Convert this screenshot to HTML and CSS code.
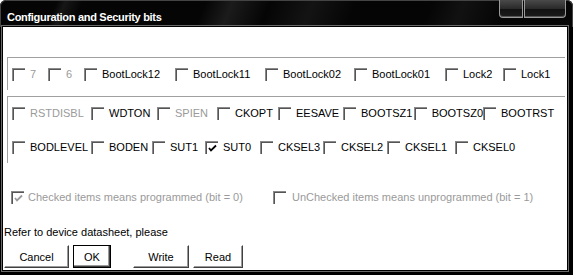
FILE: index.html
```html
<!DOCTYPE html>
<html lang="en">

<head>
    <meta charset="UTF-8">
    <title>Configuration and Security bits</title>
    <link rel="stylesheet" href="styles.css">
</head>

<body>
    <div class="window">
        <div class="titlebar">
            <span class="title">Configuration and Security bits</span>
            <div class="caption_btns">
                <span class="cap_btn small"></span>
                <span class="cap_btn wide"></span>
            </div>
        </div>
        <div class="client">
            <div class="group">
                <div class="row row1">
                    <label class="item off"><span class="cb"></span>7</label>
                    <label class="item off"><span class="cb"></span>6</label>
                    <label class="item"><span class="cb"></span>BootLock12</label>
                    <label class="item"><span class="cb"></span>BootLock11</label>
                    <label class="item"><span class="cb"></span>BootLock02</label>
                    <label class="item"><span class="cb"></span>BootLock01</label>
                    <label class="item"><span class="cb"></span>Lock2</label>
                    <label class="item"><span class="cb"></span>Lock1</label>
                </div>
            </div>
            <div class="group group2">
                <div class="row row2">
                    <label class="item off"><span class="cb"></span>RSTDISBL</label>
                    <label class="item"><span class="cb"></span>WDTON</label>
                    <label class="item off"><span class="cb"></span>SPIEN</label>
                    <label class="item"><span class="cb"></span>CKOPT</label>
                    <label class="item"><span class="cb"></span>EESAVE</label>
                    <label class="item"><span class="cb"></span>BOOTSZ1</label>
                    <label class="item"><span class="cb"></span>BOOTSZ0</label>
                    <label class="item"><span class="cb"></span>BOOTRST</label>
                </div>
                <div class="row row3">
                    <label class="item"><span class="cb"></span>BODLEVEL</label>
                    <label class="item"><span class="cb"></span>BODEN</label>
                    <label class="item"><span class="cb"></span>SUT1</label>
                    <label class="item"><span class="cb"><svg width="9" height="9" viewBox="0 0 9 9"><polyline points="1,4 3,6.5 8,1.5" fill="none" stroke="#000" stroke-width="1.8"/></svg></span>SUT0</label>
                    <label class="item"><span class="cb"></span>CKSEL3</label>
                    <label class="item"><span class="cb"></span>CKSEL2</label>
                    <label class="item"><span class="cb"></span>CKSEL1</label>
                    <label class="item"><span class="cb"></span>CKSEL0</label>
                </div>
            </div>
            <div class="row legend">
                <label class="item off"><span class="cb"><svg width="9" height="9" viewBox="0 0 9 9"><polyline points="1,4 3,6.5 8,1.5" fill="none" stroke="#9a9a9a" stroke-width="1.8"/></svg></span>Checked items means programmed (bit = 0)</label>
                <label class="item off"><span class="cb"></span>UnChecked items means unprogrammed (bit = 1)</label>
            </div>
            <div class="note">Refer to device datasheet, please</div>
            <div class="buttons">
                <button class="btn cancel">Cancel</button>
                <button class="btn ok">OK</button>
                <button class="btn write">Write</button>
                <button class="btn read">Read</button>
            </div>
        </div>
    </div>
</body>

</html>
```

FILE: styles.css
```css
* {
    margin: 0;
    padding: 0;
    box-sizing: border-box;
}

body {
    background: #fff;
    font-family: "Liberation Sans", Arial, sans-serif;
    font-size: 11px;
}

.window {
    width: 573px;
    height: 275px;
    background: #000;
    border-radius: 6px 6px 0 0;
    display: flex;
    flex-direction: column;
    padding: 0 6px 5px 3px;
    position: relative;
}

.titlebar {
    height: 27px;
    margin: 0 -6px 0 -3px;
    padding: 6px 0 0 6px;
    border-radius: 6px 6px 0 0;
    border: 1px solid #444;
    border-bottom: none;
    background:
        linear-gradient(112deg, transparent 0, transparent 52px, rgba(255, 255, 255, 0.07) 60px, transparent 76px,
            transparent 190px, rgba(255, 255, 255, 0.09) 215px, transparent 250px,
            rgba(255, 255, 255, 0.06) 290px, transparent 330px,
            transparent 400px, rgba(255, 255, 255, 0.05) 430px, transparent 470px),
        #050505;
    display: flex;
    justify-content: space-between;
}

.title {
    color: #fff;
    font-weight: bold;
    font-size: 11px;
    line-height: 20px;
    letter-spacing: -0.3px;
}

.caption_btns {
    display: flex;
    gap: 1px;
    margin: -7px 6px 0 0;
    height: 18px;
}

.cap_btn {
    display: block;
    height: 18px;
    border: 1px solid #9a9a9a;
    border-top: none;
    background: linear-gradient(#4a4a4a, #2a2a2a 50%, #111 51%, #1c1c1c);
    box-shadow: inset 0 -1px 0 #555;
}

.cap_btn.small {
    width: 24px;
    border-radius: 0 0 0 4px;
}

.cap_btn.wide {
    width: 42px;
    border-radius: 0 0 4px 0;
}

.client {
    flex: 1;
    background: #fff;
    box-shadow: 0 0 0 1px #000, 0 0 0 2px #6a6a6a;
    display: flex;
    flex-direction: column;
}

.group {
    margin: 30px 2px 0 4px;
    border-top: 1px solid #a0a0a0;
    border-left: 1px solid #a0a0a0;
    padding: 8px 0 8px 4px;
}

.group2 {
    margin-top: 6px;
}

.row {
    display: grid;
    height: 16px;
    align-items: center;
}

.row1 {
    grid-template-columns: 36px 36px 91px 90px 89px 91px 58px auto;
}

.row2 {
    grid-template-columns: 79px 66px 60px 61px 65px 71px 69px auto;
}

.row3 {
    margin-top: 18px;
    grid-template-columns: 79px 61px 53px 55px 63px 64px 68px auto;
}

.legend {
    margin: 26px 0 0 8px;
    grid-template-columns: 262px auto;
}

.item {
    display: flex;
    align-items: center;
    color: #000;
    white-space: nowrap;
}

.item.off {
    color: #9a9a9a;
}

.cb {
    width: 13px;
    height: 13px;
    margin-right: 5px;
    border-top: 1px solid #8a8a8a;
    border-left: 1px solid #8a8a8a;
    box-shadow: inset 1px 1px 0 #555;
    display: flex;
    align-items: center;
    justify-content: center;
    padding: 1px 0 0 1px;
}

.legend .cb {
    margin-right: 4px;
}

.legend .item + .item .cb {
    margin-right: 6px;
}

.note {
    margin: 20px 0 0 1px;
    line-height: 14px;
}

.buttons {
    display: flex;
    margin: 6px 0 0 1px;
}

.btn {
    height: 23px;
    font-family: "Liberation Sans", Arial, sans-serif;
    font-size: 11px;
    color: #000;
    background: #fff;
    border: 1px solid;
    border-color: #fff #404040 #404040 #fff;
    box-shadow: inset -1px -1px 0 #9a9a9a;
}

.cancel {
    width: 65px;
}

.ok {
    width: 38px;
    margin-left: 4px;
    border: 1px solid #000;
    box-shadow: inset -1px -1px 0 #404040, inset -2px -2px 0 #9a9a9a;
}

.write {
    width: 56px;
    margin-left: 22px;
}

.read {
    width: 50px;
    margin-left: 4px;
}
```
